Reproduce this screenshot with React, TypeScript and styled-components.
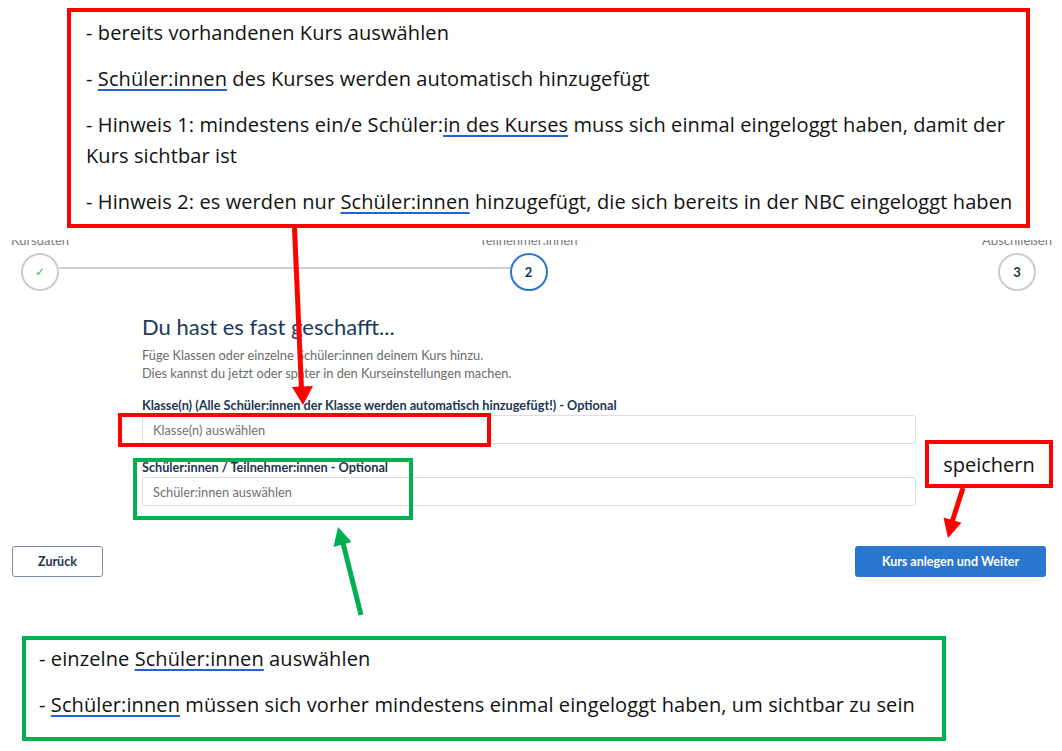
import React from "react";
import styled, { createGlobalStyle } from "styled-components";

const GlobalStyle = createGlobalStyle`
  html, body { margin: 0; padding: 0; background: #ffffff; }
  body { width: 1062px; height: 751px; overflow: hidden; font-family: Lato, "Noto Sans", sans-serif; }
  * { box-sizing: border-box; }
`;

const Page = styled.div`
  position: relative;
  width: 1062px;
  height: 751px;
  background: #ffffff;
  padding-top: 240px;
`;

/* ---------- underlying app screenshot ---------- */
const Shot = styled.section`
  display: flex;
  flex-direction: column;
  overflow: hidden;
  padding-bottom: 20px;
`;

const Stepper = styled.div`
  display: flex;
  align-items: flex-end;
  padding: 0 26px 0 21px;
  margin-top: -8px;
`;

const StepItem = styled.div`
  width: 38px;
  display: flex;
  flex-direction: column;
  align-items: center;
  gap: 5px;
`;

const StepLabel = styled.div`
  font-size: 13px;
  line-height: 16px;
  color: #7a7a7a;
  white-space: nowrap;
`;

const StepCircle = styled.div<{ $active?: boolean }>`
  width: 38px;
  height: 38px;
  border-radius: 50%;
  border: 2px solid ${(p) => (p.$active ? "#2b74cf" : "#cbcbcb")};
  display: flex;
  align-items: center;
  justify-content: center;
  font-size: 13px;
  font-weight: 700;
  color: #1b3552;
  background: #fff;
`;

const Check = styled.span`
  color: #3cb043;
  font-family: "DejaVu Sans", sans-serif;
  font-size: 12px;
`;

const Connector = styled.div<{ $visible?: boolean }>`
  flex: 1;
  height: 2px;
  margin-bottom: 22px;
  background: ${(p) => (p.$visible ? "#cfcfcf" : "transparent")};
`;

const Content = styled.div`
  width: 774px;
  margin: 23px 0 0 142px;
  display: flex;
  flex-direction: column;
`;

const Heading = styled.h1`
  margin: 0;
  font-size: 22px;
  line-height: 26px;
  font-weight: 400;
  color: #1b3a5c;
`;

const Intro = styled.p`
  margin: 6px 0 0;
  font-size: 12.8px;
  line-height: 18px;
  color: #6b6b6b;
`;

const Field = styled.div<{ $gap: number }>`
  margin-top: ${(p) => p.$gap}px;
  display: flex;
  flex-direction: column;
  gap: 2px;
`;

const FieldLabel = styled.label`
  font-size: 12.7px;
  line-height: 16px;
  font-weight: 700;
  color: #1b3552;
  white-space: nowrap;
`;

const SelectBox = styled.div`
  height: 29px;
  border: 1px solid #dddddd;
  border-radius: 3px;
  background: #fff;
  display: flex;
  align-items: center;
  padding-left: 10px;
  font-size: 12.8px;
  color: #6f6f6f;
`;

const ButtonRow = styled.div`
  margin-top: 40px;
  padding: 0 16px 0 12px;
  display: flex;
  justify-content: space-between;
`;

const Button = styled.button<{ $primary?: boolean }>`
  height: 31px;
  width: ${(p) => (p.$primary ? "191px" : "91px")};
  border-radius: 3px;
  border: ${(p) => (p.$primary ? "none" : "1px solid #7d8ea3")};
  background: ${(p) => (p.$primary ? "#2b77d0" : "#ffffff")};
  color: ${(p) => (p.$primary ? "#ffffff" : "#1b3552")};
  font-family: Lato, "Noto Sans", sans-serif;
  font-size: 12.5px;
  font-weight: 700;
`;

/* ---------- annotations (overlay) ---------- */
const Callout = styled.div<{ $color: string; $x: number; $y: number; $w: number; $h: number }>`
  position: absolute;
  left: ${(p) => p.$x}px;
  top: ${(p) => p.$y}px;
  width: ${(p) => p.$w}px;
  height: ${(p) => p.$h}px;
  border: 4px solid ${(p) => p.$color};
  background: #ffffff;
  font-family: "Open Sans", "Liberation Sans", sans-serif;
  font-size: 20px;
  letter-spacing: 0.1px;
  color: #111111;
`;

const CalloutText = styled.div<{ $pt: number; $pl: number }>`
  padding: ${(p) => p.$pt}px ${(p) => p.$pl}px 0;
  display: flex;
  flex-direction: column;
  gap: 15px;
`;

const Line = styled.p`
  margin: 0;
  line-height: 31px;
  white-space: nowrap;
`;

const U = styled.span`
  text-decoration: underline;
  text-decoration-color: #2460d6;
  text-decoration-thickness: 1.5px;
  text-underline-offset: 3px;
`;

const Frame = styled.div<{ $color: string; $x: number; $y: number; $w: number; $h: number }>`
  position: absolute;
  left: ${(p) => p.$x}px;
  top: ${(p) => p.$y}px;
  width: ${(p) => p.$w}px;
  height: ${(p) => p.$h}px;
  border: 4px solid ${(p) => p.$color};
`;

const Note = styled(Callout)`
  display: flex;
  align-items: center;
  justify-content: center;
  font-size: 20px;
  letter-spacing: 0;
`;

const Arrows = styled.svg`
  position: absolute;
  left: 0;
  top: 0;
  pointer-events: none;
`;

const RED = "#ff0000";
const GREEN = "#00b050";

export default function App() {
  return (
    <Page>
      <GlobalStyle />
      <Shot>
        <Stepper>
          <StepItem>
            <StepLabel>Kursdaten</StepLabel>
            <StepCircle>
              <Check>✓</Check>
            </StepCircle>
          </StepItem>
          <Connector $visible />
          <StepItem>
            <StepLabel>Teilnehmer:innen</StepLabel>
            <StepCircle $active>2</StepCircle>
          </StepItem>
          <Connector />
          <StepItem>
            <StepLabel>Abschließen</StepLabel>
            <StepCircle>3</StepCircle>
          </StepItem>
        </Stepper>

        <Content>
          <Heading>Du hast es fast geschafft...</Heading>
          <Intro>
            Füge Klassen oder einzelne Schüler:innen deinem Kurs hinzu.
            <br />
            Dies kannst du jetzt oder später in den Kurseinstellungen machen.
          </Intro>
          <Field $gap={15}>
            <FieldLabel>
              Klasse(n) (Alle Schüler:innen der Klasse werden automatisch hinzugefügt!) - Optional
            </FieldLabel>
            <SelectBox>Klasse(n) auswählen</SelectBox>
          </Field>
          <Field $gap={15}>
            <FieldLabel>Schüler:innen / Teilnehmer:innen - Optional</FieldLabel>
            <SelectBox>Schüler:innen auswählen</SelectBox>
          </Field>
        </Content>

        <ButtonRow>
          <Button>Zurück</Button>
          <Button $primary>Kurs anlegen und Weiter</Button>
        </ButtonRow>
      </Shot>

      <Callout $color={RED} $x={67} $y={8} $w={963} $h={220}>
        <CalloutText $pt={5} $pl={15}>
          <Line>- bereits vorhandenen Kurs auswählen</Line>
          <Line>
            - <U>Schüler:innen</U> des Kurses werden automatisch hinzugefügt
          </Line>
          <Line>
            - Hinweis 1: mindestens ein/e Schüler:<U>in des Kurses</U> muss sich einmal eingeloggt haben, damit der
            <br />
            Kurs sichtbar ist
          </Line>
          <Line>
            - Hinweis 2: es werden nur <U>Schüler:innen</U> hinzugefügt, die sich bereits in der NBC eingeloggt haben
          </Line>
        </CalloutText>
      </Callout>

      <Frame $color={RED} $x={118} $y={413} $w={373} $h={34} />
      <Frame $color={GREEN} $x={133} $y={458} $w={280} $h={62} />

      <Note $color={RED} $x={925} $y={440} $w={128} $h={48}>
        speichern
      </Note>

      <Callout $color={GREEN} $x={22} $y={636} $w={924} $h={105}>
        <CalloutText $pt={3} $pl={13}>
          <Line>
            - einzelne <U>Schüler:innen</U> auswählen
          </Line>
          <Line>
            - <U>Schüler:innen</U> müssen sich vorher mindestens einmal eingeloggt haben, um sichtbar zu sein
          </Line>
        </CalloutText>
      </Callout>

      <Arrows width={1062} height={751} viewBox="0 0 1062 751">
        <line x1={294.5} y1={228} x2={301.5} y2={389} stroke={RED} strokeWidth={5} />
        <polygon points="292,387 313,386 303,405" fill={RED} />
        <line x1={963} y1={488} x2={952} y2={522} stroke={RED} strokeWidth={5} />
        <polygon points="961.5,522.8 943.5,517.4 948,538" fill={RED} />
        <line x1={361} y1={615} x2={343} y2={543} stroke={GREEN} strokeWidth={5} />
        <polygon points="351.5,542 333.5,547 338,527" fill={GREEN} />
      </Arrows>
    </Page>
  );
}
